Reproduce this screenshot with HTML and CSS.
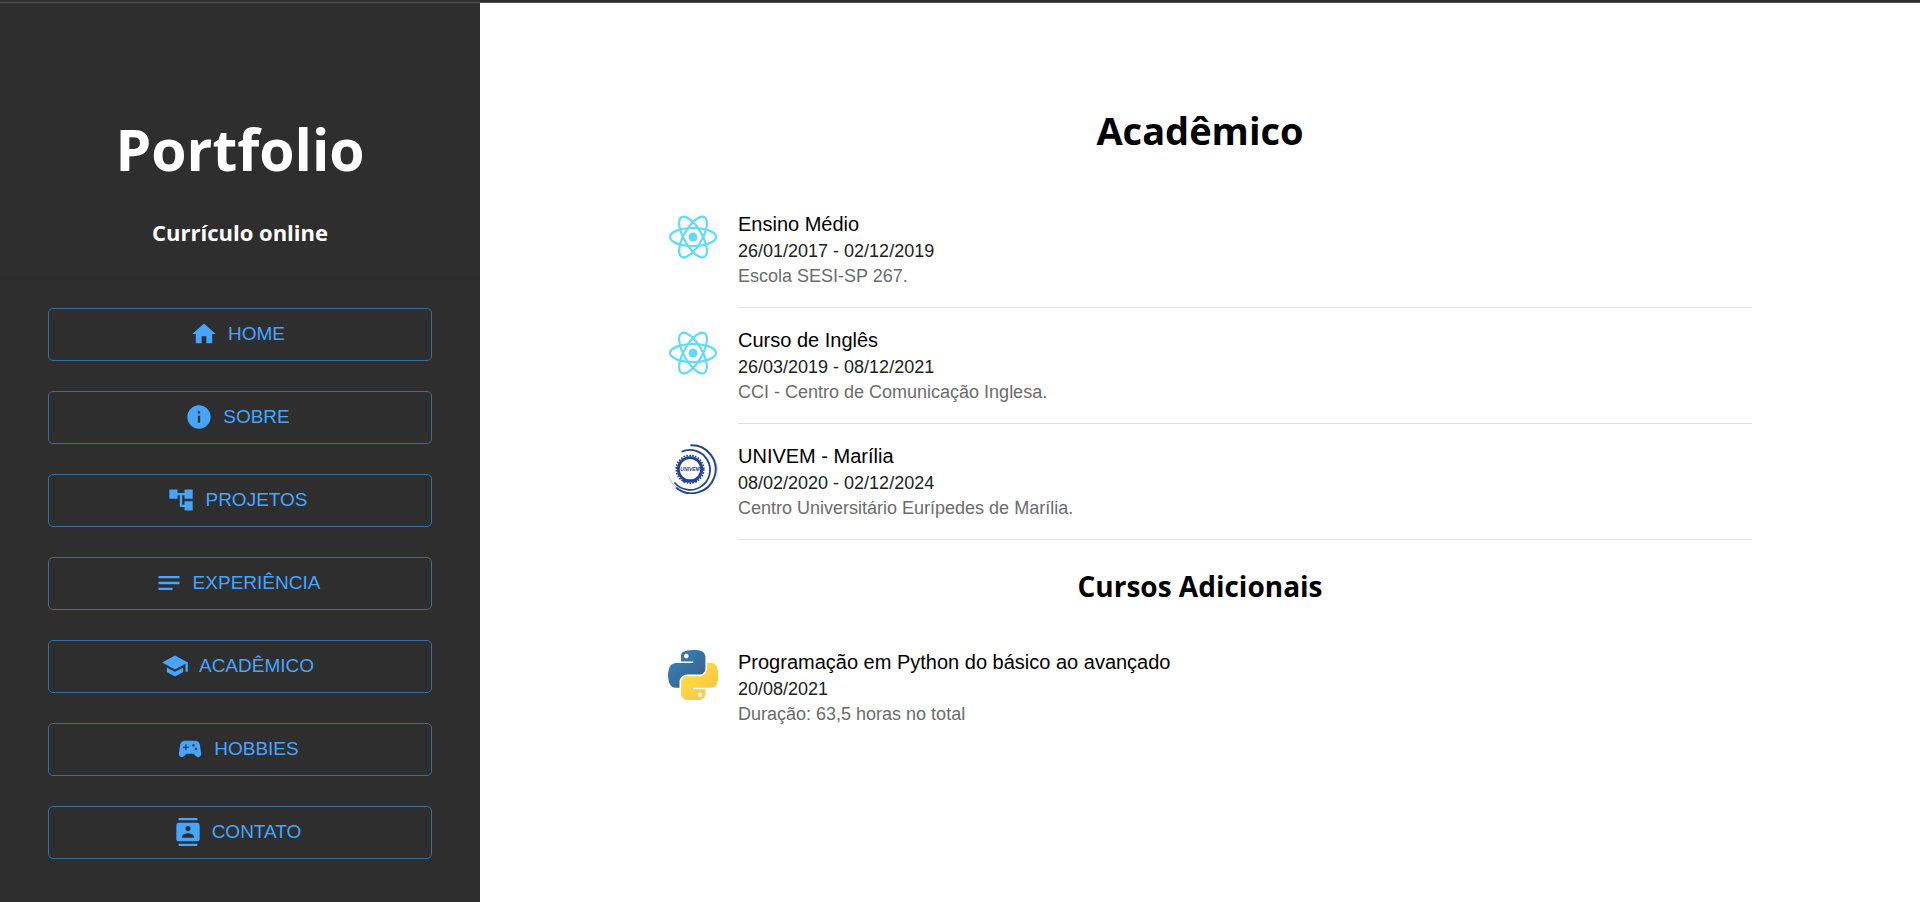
FILE: index.html
```html
<!DOCTYPE html>
<html lang="pt-BR">
<head>
<meta charset="utf-8">
<meta name="viewport" content="width=device-width, initial-scale=1">
<title>Portfolio</title>
<link rel="stylesheet" href="styles.css">
</head>
<body>
<svg width="0" height="0" class="defs" aria-hidden="true">
  <symbol id="react" viewBox="0 0 50 50">
    <circle cx="25" cy="25" r="4.5" fill="#61dafb"/>
    <g fill="none" stroke="#61dafb" stroke-width="2.2">
      <ellipse cx="25" cy="25" rx="23" ry="9"/>
      <ellipse cx="25" cy="25" rx="23" ry="9" transform="rotate(60 25 25)"/>
      <ellipse cx="25" cy="25" rx="23" ry="9" transform="rotate(120 25 25)"/>
    </g>
  </symbol>
</svg>
<div class="topline"></div>
<div class="layout">
  <aside class="sidebar">
    <header class="brand">
      <h1 class="brand-title">Portfolio</h1>
      <p class="brand-sub">Currículo online</p>
    </header>
    <nav class="menu">
      <a class="menu-link" href="#home"><svg class="icon" viewBox="0 0 24 24"><path d="M10 20v-6h4v6h5v-8h3L12 3 2 12h3v8z"/></svg>HOME</a>
      <a class="menu-link" href="#sobre"><svg class="icon" viewBox="0 0 24 24"><path d="M12 2C6.48 2 2 6.48 2 12s4.480 10 10 10 10-4.480 10-10S17.520 2 12 2zm1 15h-2v-6h2v6zm0-8h-2V7h2v2z"/></svg>SOBRE</a>
      <a class="menu-link" href="#projetos"><svg class="icon" viewBox="0 0 24 24"><path d="M22 11V3h-7v3H9V3H2v8h7V8h2v10h4v3h7v-8h-7v3h-2V8h2v3z"/></svg>PROJETOS</a>
      <a class="menu-link" href="#experiencia"><svg class="icon" viewBox="0 0 24 24"><path d="M21 11.010 3 11v2h18zM3 16h12v2H3zM21 6H3v2.010L21 8z"/></svg>EXPERIÊNCIA</a>
      <a class="menu-link" href="#academico"><svg class="icon" viewBox="0 0 24 24"><path d="M5 13.180v4L12 21l7-3.820v-4L12 17l-7-3.820zM12 3 1 9l11 6 9-4.910V17h2V9L12 3z"/></svg>ACADÊMICO</a>
      <a class="menu-link" href="#hobbies"><svg class="icon" viewBox="0 0 24 24"><path d="m21.580 16.090-1.090-7.660C20.210 6.460 18.520 5 16.530 5H7.470C5.480 5 3.790 6.460 3.510 8.430l-1.090 7.660C2.200 17.630 3.390 19 4.940 19c.68 0 1.320-.27 1.800-.75L9 16h6l2.250 2.250c.48.48 1.130.75 1.800.75 1.560 0 2.750-1.370 2.530-2.910zM11 11H9v2H8v-2H6v-1h2V8h1v2h2v1zm4-1c-.55 0-1-.45-1-1s.45-1 1-1 1 .45 1 1-.45 1-1 1zm2 3c-.55 0-1-.45-1-1s.45-1 1-1 1 .45 1 1-.45 1-1 1z"/></svg>HOBBIES</a>
      <a class="menu-link" href="#contato"><svg class="icon" viewBox="0 0 24 24"><path d="M20 0H4v2h16V0zM4 24h16v-2H4v2zM20 4H4c-1.100 0-2 .9-2 2v12c0 1.100.9 2 2 2h16c1.100 0 2-.9 2-2V6c0-1.100-.9-2-2-2zm-8 2.750c1.240 0 2.250 1.010 2.250 2.250s-1.010 2.250-2.250 2.250S9.750 10.240 9.750 9 10.760 6.750 12 6.750zM17 17H7v-1.500c0-1.670 3.330-2.500 5-2.500s5 .83 5 2.500V17z"/></svg>CONTATO</a>
    </nav>
  </aside>
  <main class="content">
    <h2 class="page-title">Acadêmico</h2>
    <ul class="list">
      <li class="item">
        <svg class="avatar" role="img" aria-label="React"><use href="#react"/></svg>
        <div class="item-body divided">
          <h3 class="item-title">Ensino Médio</h3>
          <p class="item-date">26/01/2017 - 02/12/2019</p>
          <p class="item-note">Escola SESI-SP 267.</p>
        </div>
      </li>
      <li class="item">
        <svg class="avatar" role="img" aria-label="React"><use href="#react"/></svg>
        <div class="item-body divided">
          <h3 class="item-title">Curso de Inglês</h3>
          <p class="item-date">26/03/2019 - 08/12/2021</p>
          <p class="item-note">CCI - Centro de Comunicação Inglesa.</p>
        </div>
      </li>
      <li class="item">
        <svg class="avatar" role="img" aria-label="Univem" viewBox="0 0 50 50">
          <g fill="none" stroke="#24438f">
            <circle cx="22" cy="25.300" r="11.700" stroke-width="2.800"/>
            <circle cx="22" cy="25.300" r="13.800" stroke-width="1.600" stroke-dasharray="1.700 1.200"/>
            <path d="M13.500 7.800A20 20 0 1 1 6.500 38.500" stroke-width="1.800"/>
            <path d="M22.500 1.300A24 24 0 1 1 8 43.500" stroke-width="1.900"/>
            <path d="M37 4.500A25.500 25.500 0 0 1 48.800 32" stroke-width=".5" opacity=".5"/>
            <path d="M1 33A25 25 0 0 0 8 43.500" stroke-width=".7" opacity=".5"/>
            <path d="M15 37h14" stroke-width="2.600"/>
          </g>
          <text class="seal-text" x="22" y="27.300" text-anchor="middle">UNIVEM</text>
        </svg>
        <div class="item-body divided">
          <h3 class="item-title">UNIVEM - Marília</h3>
          <p class="item-date">08/02/2020 - 02/12/2024</p>
          <p class="item-note">Centro Universitário Eurípedes de Marília.</p>
        </div>
      </li>
    </ul>
    <h2 class="section-title">Cursos Adicionais</h2>
    <ul class="list">
      <li class="item">
        <svg class="avatar" role="img" aria-label="Python" viewBox="0 0 110 110">
          <defs>
            <linearGradient id="pyBlue" x1="0" y1="0" x2="1" y2="1"><stop offset="0" stop-color="#3b82bd"/><stop offset="1" stop-color="#35608a"/></linearGradient>
            <linearGradient id="pyGold" x1="0" y1="0" x2="1" y2="1"><stop offset="0" stop-color="#ffe052"/><stop offset="1" stop-color="#ffc331"/></linearGradient>
          </defs>
          <path fill="url(#pyBlue)" d="M54.900 0c-4.600 0-9 .4-12.800 1.100C30.800 3.100 28.700 7.300 28.700 15v10.200h26.800v3.400H18.600c-7.800 0-14.600 4.700-16.700 13.600-2.500 10.200-2.600 16.600 0 27.200 1.900 7.900 6.400 13.600 14.200 13.600h9.200V70.800c0-8.900 7.600-16.700 16.800-16.700h26.800c7.500 0 13.400-6.100 13.400-13.600V15c0-7.300-6.100-12.700-13.400-13.900C64.300.3 59.500 0 54.900 0zM40.400 8.200c2.800 0 5 2.300 5 5.100s-2.200 5.100-5 5.100-5-2.300-5-5.100 2.200-5.100 5-5.100z"/>
          <path fill="url(#pyGold)" d="M85.600 28.700v11.900c0 9.200-7.800 17-16.700 17H42.100c-7.300 0-13.400 6.300-13.400 13.600v25.500c0 7.300 6.300 11.500 13.400 13.600 8.500 2.500 16.600 2.900 26.800 0 6.700-2 13.400-5.900 13.400-13.600V86.500H55.500v-3.400h40.200c7.800 0 10.700-5.400 13.400-13.600 2.800-8.400 2.700-16.500 0-27.200-1.900-7.800-5.600-13.600-13.400-13.600zM70.500 93.300c2.800 0 5 2.300 5 5.100s-2.200 5.100-5 5.100-5-2.300-5-5.100 2.200-5.100 5-5.100z"/>
        </svg>
        <div class="item-body">
          <h3 class="item-title">Programação em Python do básico ao avançado</h3>
          <p class="item-date">20/08/2021</p>
          <p class="item-note">Duração: 63,5 horas no total</p>
        </div>
      </li>
    </ul>
  </main>
</div>
</body>
</html>
```
FILE: styles.css
```css
* { box-sizing: border-box; }
h1, h2, h3, p, ul { margin: 0; padding: 0; }

body {
  margin: 0;
  min-height: 100vh;
  display: flex;
  flex-direction: column;
  background: #fff;
  font-family: "Liberation Sans", Arial, sans-serif;
}

.defs { position: absolute; }

.topline {
  height: 3px;
  background: #2e2e2e;
  border-bottom: 1px solid #555;
}

.layout {
  flex: 1;
  display: grid;
  grid-template-columns: 1fr 3fr;
}

.sidebar { background: #2e2e2e; }

.brand {
  padding: 106px 16px 30px;
  border-bottom: 1px solid #292929;
  color: #fff;
  text-align: center;
  font-family: "Open Sans", "Noto Sans", sans-serif;
}

.brand-title {
  font-size: 57px;
  line-height: 80px;
  font-weight: 700;
}

.brand-sub {
  margin-top: 28px;
  font-size: 22px;
  line-height: 30px;
  font-weight: 700;
}

.menu {
  display: flex;
  flex-direction: column;
  gap: 30px;
  padding: 30px 10%;
}

.menu-link {
  display: flex;
  align-items: center;
  justify-content: center;
  height: 53px;
  padding-bottom: 2px;
  border: 1px solid #3a6c9e;
  border-radius: 5px;
  color: #45a5ff;
  font-size: 19px;
  line-height: 32px;
  text-decoration: none;
}

.icon {
  width: 28px;
  height: 28px;
  margin: 0 10px 0 -5px;
  fill: currentColor;
}

.content { padding: 101px 10% 32px; }

.page-title,
.section-title {
  color: #000;
  text-align: center;
  font-family: "Open Sans", "Noto Sans", sans-serif;
  font-weight: 700;
}

.page-title {
  margin-bottom: 36px;
  font-size: 38px;
  line-height: 52px;
}

.section-title {
  margin: 27px 0 25px;
  font-size: 28px;
  line-height: 38px;
}

.list {
  padding: 0 24px 0 44px;
  list-style: none;
}

.item {
  display: flex;
  align-items: flex-start;
  gap: 20px;
}

.avatar {
  flex: none;
  width: 50px;
  height: 50px;
  margin-top: 20px;
}

.seal-text {
  fill: #24438f;
  font: italic 700 5px "Liberation Sans", Arial, sans-serif;
}

.item-body {
  flex: 1;
  padding: 17px 0 18px;
}

.divided { border-bottom: 1px solid #e0e0e0; }

.item-title {
  color: #000;
  font-size: 20px;
  line-height: 30px;
  font-weight: 400;
}

.item-date,
.item-note {
  font-size: 18px;
  line-height: 25px;
}

.item-date { color: #212121; }
.item-note { color: #6b6b6b; }
```
